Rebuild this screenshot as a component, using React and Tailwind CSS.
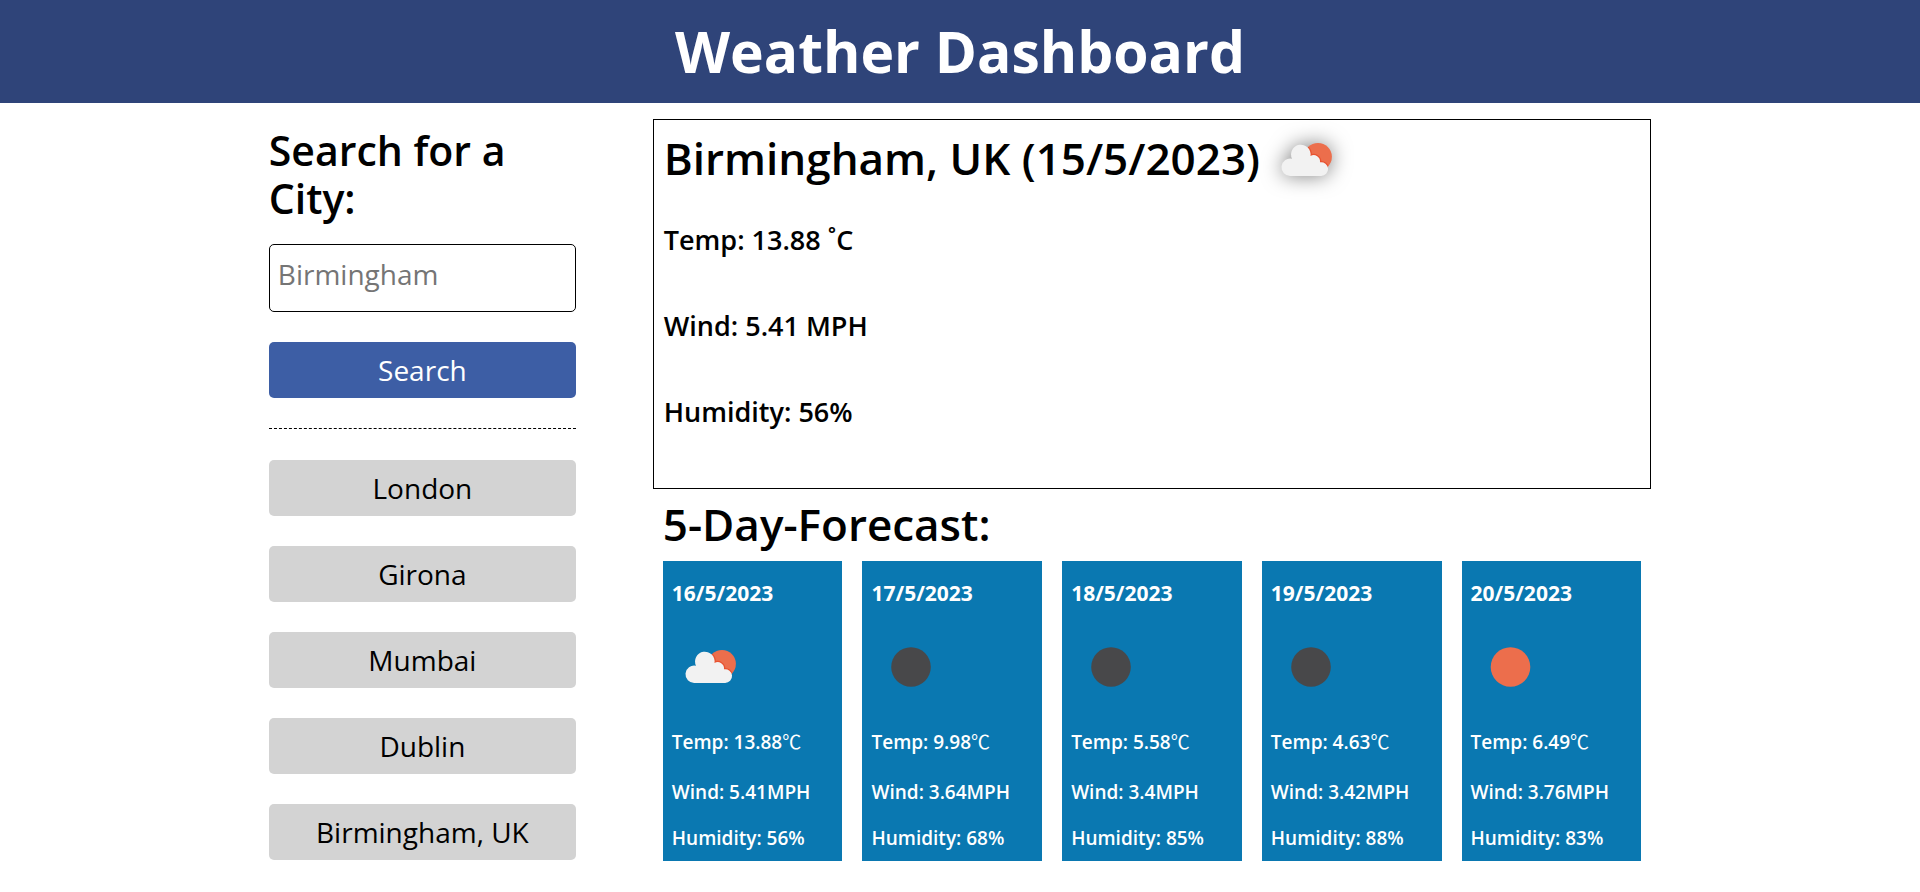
const savedCities = ["London", "Girona", "Mumbai", "Dublin", "Birmingham, UK"];

const forecast = [
  { date: "16/5/2023", icon: "fewClouds", temp: "13.88", wind: "5.41", humidity: 56 },
  { date: "17/5/2023", icon: "clearNight", temp: "9.98", wind: "3.64", humidity: 68 },
  { date: "18/5/2023", icon: "clearNight", temp: "5.58", wind: "3.4", humidity: 85 },
  { date: "19/5/2023", icon: "clearNight", temp: "4.63", wind: "3.42", humidity: 88 },
  { date: "20/5/2023", icon: "clearDay", temp: "6.49", wind: "3.76", humidity: 83 },
];

const cloudPath =
  "M22.5 56 A8.7 8.7 0 1 1 24 38.8 A9.8 9.8 0 1 1 42.5 36 A6.4 6.4 0 0 1 52 42.3 A6.9 6.9 0 1 1 53 56 Z";

function WeatherIcon({ name, className = "" }) {
  return (
    <svg viewBox="0 0 80 80" className={`size-20 shrink-0 ${className}`} aria-hidden="true">
      {name === "fewClouds" && (
        <>
          <clipPath id="sun-disc">
            <circle cx="50" cy="36.8" r="13.9" />
          </clipPath>
          <circle cx="50" cy="36.8" r="13.9" fill="#ec6e4c" />
          <path d={cloudPath} fill="none" stroke="#e85230" strokeWidth="2.5" clipPath="url(#sun-disc)" />
          <path d={cloudPath} fill="#f2f2f2" />
        </>
      )}
      {name === "clearNight" && <circle cx="40" cy="40" r="19.8" fill="#48484a" />}
      {name === "clearDay" && <circle cx="39.5" cy="40" r="19.8" fill="#ec6e4c" />}
    </svg>
  );
}

function Sidebar() {
  return (
    <aside className="w-[16vw]">
      <form onSubmit={(e) => e.preventDefault()} className="flex flex-col">
        <label htmlFor="city" className="pt-[7px] text-[41px] leading-12 font-semibold">
          Search for a City:
        </label>
        <input
          id="city"
          type="text"
          placeholder="Birmingham"
          className="mt-[22px] h-17 w-full rounded-[5px] border border-black bg-white px-2 pb-2 text-[28px] placeholder:text-[#757575]"
        />
        <button type="submit" className="mt-[30px] h-14 rounded-[5px] bg-[#3d5ea5] text-[28px] text-white">
          Search
        </button>
      </form>
      <hr className="mt-[30px] border-t border-dashed border-black" />
      <div className="mt-[31px] flex flex-col gap-[30px]">
        {savedCities.map((city) => (
          <button key={city} type="button" className="h-14 rounded-[5px] bg-[#d3d3d3] text-[28px]">
            {city}
          </button>
        ))}
      </div>
    </aside>
  );
}

function Today() {
  return (
    <section className="h-[370px] border border-black px-[10px]">
      <h2 className="flex items-center gap-2 text-[44px] leading-12 font-semibold">
        <span className="pb-1">Birmingham, UK (15/5/2023)</span>
        <WeatherIcon name="fewClouds" className="drop-shadow-[0_0_10px_rgba(0,0,0,0.5)]" />
      </h2>
      <div className="mt-[25px] flex flex-col gap-14 text-[27px] leading-[30px] font-semibold">
        <p>Temp: 13.88 ˚C</p>
        <p>Wind: 5.41 MPH</p>
        <p>Humidity: 56%</p>
      </div>
    </section>
  );
}

function DayCard({ day }) {
  return (
    <article className="h-[300px] bg-[#0a78b1] px-[9px] pt-5 text-[19px] leading-6 font-semibold text-white">
      <h4 className="text-[21px] font-bold">{day.date}</h4>
      <WeatherIcon name={day.icon} className="mt-[22px]" />
      <p className="mt-[23px]">
        Temp: {day.temp}
        <span className="font-normal">℃</span>
      </p>
      <p className="mt-[26px]">Wind: {day.wind}MPH</p>
      <p className="mt-[22px]">Humidity: {day.humidity}%</p>
    </article>
  );
}

export default function App() {
  return (
    <div className="min-h-screen bg-white font-['Trebuchet_MS','Open_Sans','Noto_Sans_CJK_JP',sans-serif] text-black">
      <header className="flex h-[103px] items-center justify-center bg-[#2f4479]">
        <h1 className="text-[57px] leading-none font-bold text-white">Weather Dashboard</h1>
      </header>
      <main className="mx-auto flex w-[72vw] justify-between pt-4">
        <Sidebar />
        <div className="w-[52vw]">
          <Today />
          <section className="px-[10px]">
            <h3 className="pt-[11px] pb-[13px] text-[44px] leading-12 font-semibold">5-Day-Forecast:</h3>
            <div className="grid grid-cols-5 gap-5">
              {forecast.map((day) => (
                <DayCard key={day.date} day={day} />
              ))}
            </div>
          </section>
        </div>
      </main>
    </div>
  );
}
